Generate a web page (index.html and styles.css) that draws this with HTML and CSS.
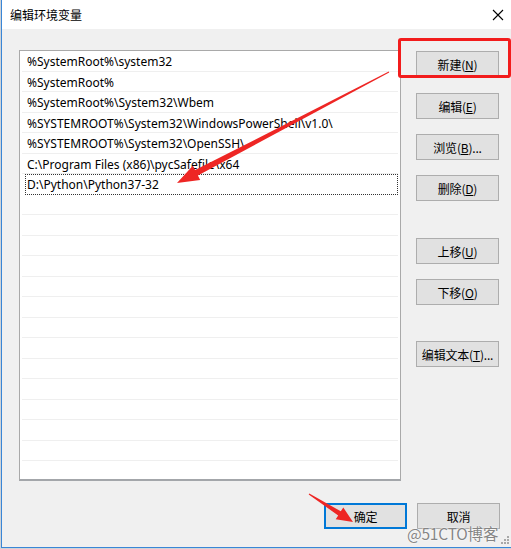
FILE: index.html
```html
<!DOCTYPE html>
<html lang="zh">
<head>
<meta charset="utf-8">
<link rel="stylesheet" href="styles.css">
</head>
<body>
<div class="window">
  <div class="titlebar">
    <span class="title">编辑环境变量</span>
    <svg class="close" width="12" height="12" viewBox="0 0 12 12"><path d="M1 1L11 11M11 1L1 11" stroke="#000" stroke-width="1.1" fill="none"/></svg>
  </div>
  <div class="content">
    <div class="main">
      <div class="list">
        <div class="row">%SystemRoot%\system32</div>
        <div class="row">%SystemRoot%</div>
        <div class="row">%SystemRoot%\System32\Wbem</div>
        <div class="row">%SYSTEMROOT%\System32\WindowsPowerShell\v1.0\</div>
        <div class="row">%SYSTEMROOT%\System32\OpenSSH\</div>
        <div class="row">C:\Program Files (x86)\pycSafefile\x64</div>
        <div class="row focus">D:\Python\Python37-32</div>
        <div class="row"></div><div class="row"></div><div class="row"></div>
        <div class="row"></div><div class="row"></div><div class="row"></div>
        <div class="row"></div><div class="row"></div><div class="row"></div>
        <div class="row"></div><div class="row"></div><div class="row"></div>
        <div class="row"></div><div class="row"></div><div class="row"></div>
      </div>
      <div class="side">
        <button class="btn">新建(<u>N</u>)</button>
        <button class="btn g16">编辑(<u>E</u>)</button>
        <button class="btn g15">浏览(<u>B</u>)...</button>
        <button class="btn g15">删除(<u>D</u>)</button>
        <button class="btn g37">上移(<u>U</u>)</button>
        <button class="btn g15">下移(<u>O</u>)</button>
        <button class="btn g36">编辑文本(<u>T</u>)...</button>
      </div>
    </div>
    <div class="footer">
      <button class="btn primary">确定</button>
      <button class="btn">取消</button>
    </div>
  </div>
  <div class="redbox"></div>
  <svg class="arrows" width="511" height="549" viewBox="0 0 511 549">
    <polygon fill="#ee2624" points="389.2,72.4 197.9,175.5 200.2,179.9 177,183 192.8,165.7 195.1,170.1 388.8,71.6"/>
    <polygon fill="#ee2624" points="308.7,494.4 338.2,515.5 335.7,519.3 353,522 343.3,507.5 340.8,511.3 309.3,493.6"/>
  </svg>
  <div class="watermark">@51CTO博客</div>
  <div class="grip">
    <i style="left:6px;top:0"></i>
    <i style="left:3px;top:3px"></i><i style="left:6px;top:3px"></i>
    <i style="left:0;top:6px"></i><i style="left:3px;top:6px"></i><i style="left:6px;top:6px"></i>
  </div>
</div>
</body>
</html>
```
FILE: styles.css
```css
* { box-sizing: border-box; }
html, body { margin: 0; padding: 0; }
body {
  width: 511px;
  height: 549px;
  background: #cfd3d8;
  overflow: hidden;
  font-family: "Noto Sans", "Noto Sans CJK SC", sans-serif;
}
.window {
  position: relative;
  margin-left: 1px;
  width: 510px;
  height: 548px;
  background: #f0f0f0;
  border-left: 1px solid #3a86d6;
  border-bottom: 1px solid #3a86d6;
}
.titlebar {
  height: 29px;
  background: #fff;
  display: flex;
  align-items: center;
  justify-content: space-between;
  padding: 0 7px 0 8px;
}
.title {
  font-family: "Noto Sans CJK SC", sans-serif;
  font-size: 12px;
  color: #000;
}
.close { display: block; }
.content {
  padding: 21px 11px 0 17px;
}
.main {
  display: flex;
  gap: 15px;
}
.list {
  width: 382px;
  height: 431px;
  background: #fff;
  border: 1px solid #a9a9a9;
  border-bottom: 2px solid #a3a6aa;
  overflow: hidden;
  padding: 0 2px 0 2px;
}
.row {
  height: 20.5px;
  border-bottom: 1px solid #efefef;
  font-size: 12px;
  line-height: 21px;
  padding-left: 5px;
  color: #000;
  white-space: nowrap;
}
.focus {
  border: 1px dotted #333;
  margin-left: 3px;
  padding-left: 1px;
  line-height: 19px;
}
.side {
  display: flex;
  flex-direction: column;
  width: 83px;
  padding-top: 1px;
}
.btn {
  width: 83px;
  height: 26px;
  background: #e1e1e1;
  border: 1px solid #adadad;
  font-family: "Noto Sans CJK SC", sans-serif;
  font-size: 12px;
  color: #000;
  padding: 0;
  margin: 0;
  white-space: nowrap;
  letter-spacing: -0.2px;
}
.g15 { margin-top: 15px; }
.g16 { margin-top: 16px; }
.g37 { margin-top: 37px; }
.g36 { margin-top: 36px; }
.footer {
  display: flex;
  justify-content: flex-end;
  gap: 10px;
  margin-top: 22px;
}
.primary {
  border: 2px solid #0078d7;
}
.redbox {
  position: absolute;
  left: 396px;
  top: 38px;
  width: 113px;
  height: 40px;
  border: 3px solid #f21c1c;
  border-radius: 3px;
}
.arrows {
  position: absolute;
  left: -2px;
  top: 0;
  pointer-events: none;
}
.watermark {
  position: absolute;
  left: 405px;
  top: 522px;
  font-family: "Noto Sans CJK SC", sans-serif;
  font-size: 15.5px;
  color: #858585;
  text-shadow: 0 0 2px #fff, 0 0 1px #fff;
  letter-spacing: -0.2px;
}
.grip {
  position: absolute;
  right: 2px;
  bottom: 3px;
  width: 8px;
  height: 8px;
}
.grip i {
  position: absolute;
  width: 2px;
  height: 2px;
  background: #a8a8a8;
}
```
